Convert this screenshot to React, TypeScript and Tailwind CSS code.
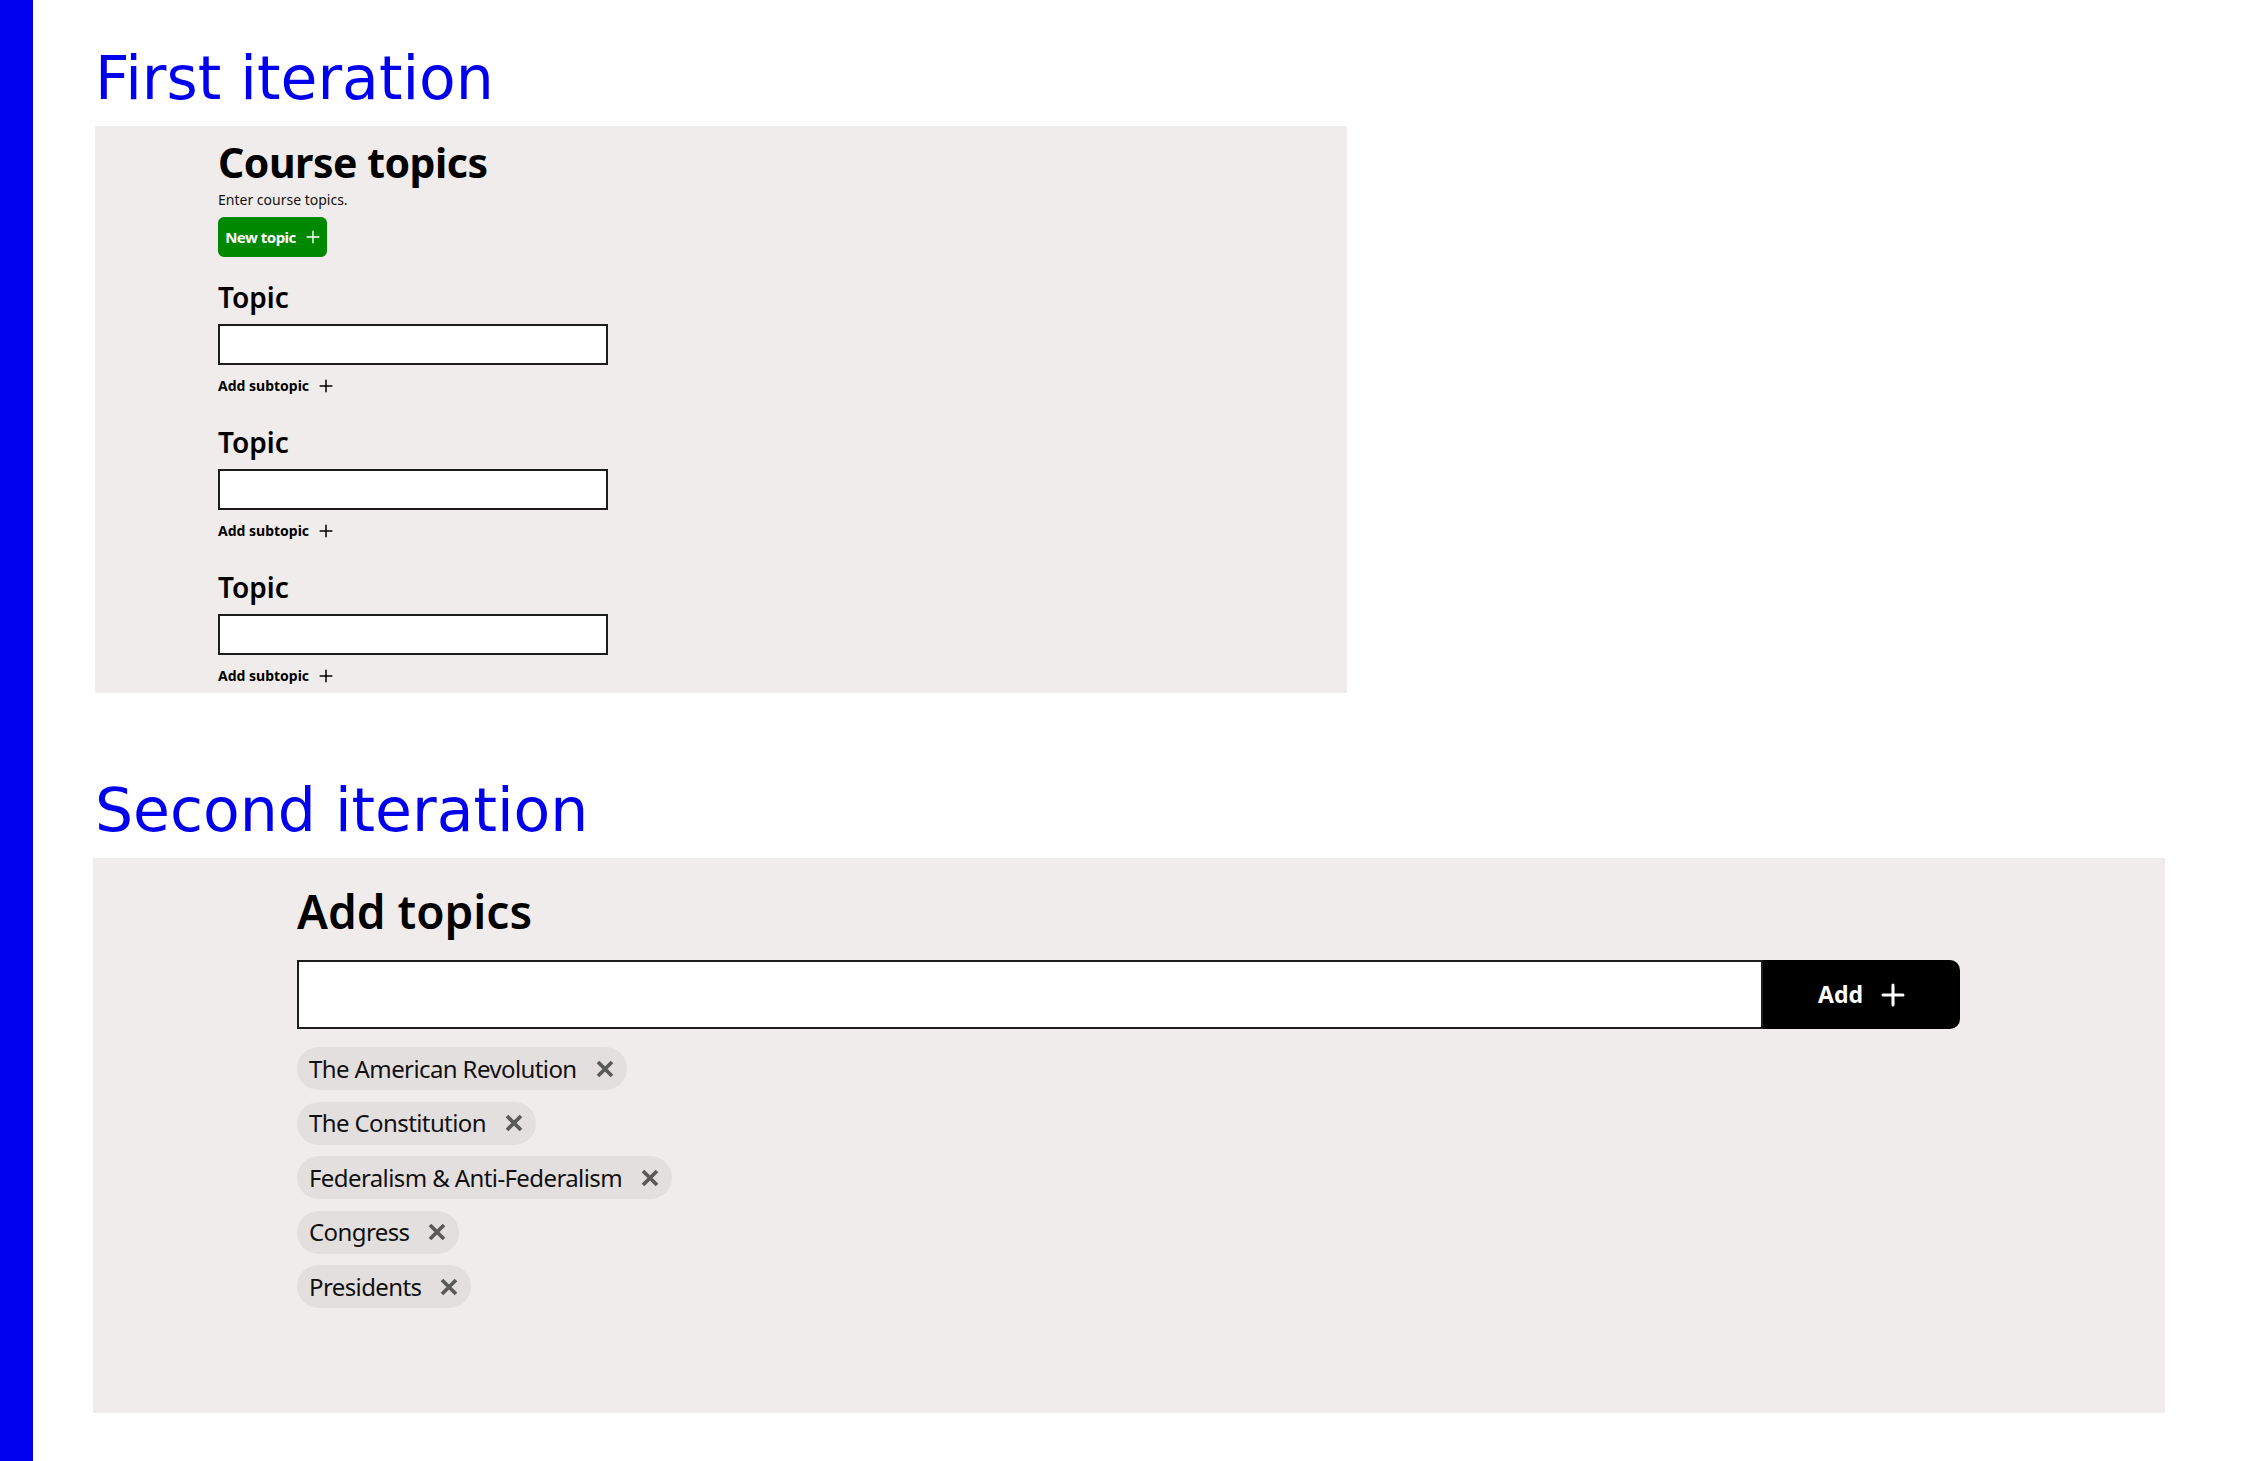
import React from "react";

function PlusIcon({ size, stroke }: { size: number; stroke: number }) {
  return (
    <svg width={size} height={size} viewBox="0 0 24 24" fill="none" aria-hidden="true">
      <path d="M12 2v20M2 12h20" stroke="currentColor" strokeWidth={stroke} strokeLinecap="round" />
    </svg>
  );
}

function XIcon() {
  return (
    <svg width={18} height={18} viewBox="0 0 18 18" fill="none" aria-hidden="true">
      <path d="M2 2l14 14M16 2L2 16" stroke="currentColor" strokeWidth={3.8} />
    </svg>
  );
}

function TopicBlock({ first }: { first?: boolean }) {
  return (
    <div className={first ? "mt-[22px]" : "mt-[28px]"}>
      <div className="text-[28px] leading-[36px] font-semibold text-black">Topic</div>
      <input
        type="text"
        aria-label="Topic"
        className="mt-[9px] block h-[41px] w-[390px] border-2 border-[#1c1c1c] bg-white outline-none"
      />
      <button className="mt-[11px] flex h-[20px] items-center gap-[10px] text-[14px] leading-[20px] font-bold text-black">
        <span>Add subtopic</span>
        <span className="flex h-[14px] w-[14px] items-center justify-center">
          <PlusIcon size={14} stroke={2.6} />
        </span>
      </button>
    </div>
  );
}

const chips = [
  "The American Revolution",
  "The Constitution",
  "Federalism & Anti-Federalism",
  "Congress",
  "Presidents",
];

export default function App() {
  return (
    <div className="flex min-h-[1461px] w-full bg-white [font-family:'Noto_Sans',sans-serif]">
      <div className="w-[33px] shrink-0 bg-[#0000ee]" />
      <main className="pl-[62px] pt-[43px]">
        <h1 className="[font-family:'DejaVu_Sans',sans-serif] text-[60px] leading-[70px] font-normal text-[#0000ee]">
          First iteration
        </h1>
        <section className="mt-[13px] w-[1252px] bg-[#f0eceb] pl-[123px] pt-[12px] pb-[7px]">
          <h2 className="text-[41px] leading-[48px] font-bold tracking-[-0.5px] text-black">Course topics</h2>
          <p className="mt-[4px] text-[14px] leading-[20px] text-[#111]">Enter course topics.</p>
          <button className="mt-[7px] flex h-[40px] w-[109px] items-center justify-center gap-[10px] rounded-[6px] bg-[#008800] text-[15px] font-bold tracking-[-0.5px] text-white">
            <span>New topic</span>
            <PlusIcon size={14} stroke={2.4} />
          </button>
          <TopicBlock first />
          <TopicBlock />
          <TopicBlock />
        </section>

        <h1 className="mt-[82px] [font-family:'DejaVu_Sans',sans-serif] text-[60px] leading-[70px] font-normal text-[#0000ee]">
          Second iteration
        </h1>
        <section className="mt-[13px] -ml-[2px] w-[2072px] bg-[#f0eceb] pl-[204px] pt-[25px] pb-[105px]">
          <h2 className="text-[46px] leading-[56px] font-semibold text-black">Add topics</h2>
          <div className="mt-[21px] flex h-[69px] w-[1663px]">
            <input
              type="text"
              aria-label="Add topic"
              className="h-full min-w-0 flex-1 border-2 border-[#1c1c1c] bg-white outline-none"
            />
            <button className="flex h-full w-[197px] items-center justify-center gap-[18px] rounded-r-[10px] bg-black text-[23px] font-bold text-white">
              <span>Add</span>
              <PlusIcon size={24} stroke={3} />
            </button>
          </div>
          <ul className="mt-[18px] flex flex-col items-start gap-[11.5px]">
            {chips.map((c) => (
              <li
                key={c}
                className="flex h-[43px] items-center gap-[19px] rounded-full bg-[#e4dfdf] pl-[12px] pr-[13px] text-[24px] leading-none tracking-[-0.6px] text-[#111]"
              >
                <span>{c}</span>
                <span className="text-[#5a5a5a]">
                  <XIcon />
                </span>
              </li>
            ))}
          </ul>
        </section>
      </main>
    </div>
  );
}
